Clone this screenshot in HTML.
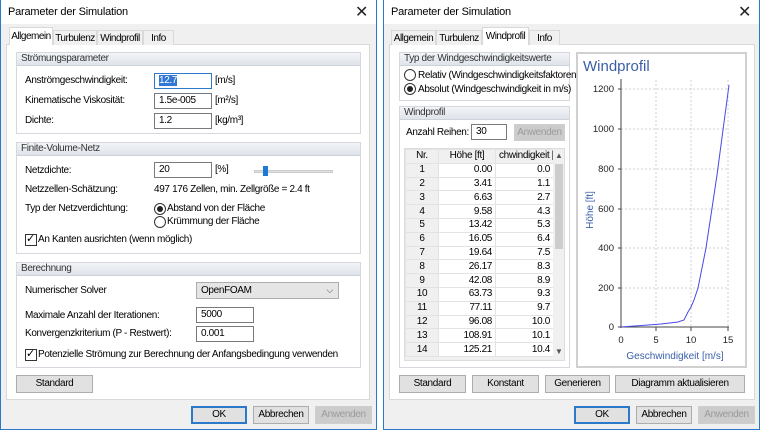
<!DOCTYPE html>
<html><head><meta charset="utf-8"><style>
*{box-sizing:border-box;margin:0;padding:0}
body{width:760px;height:430px;background:#fff;font-family:"Liberation Sans",Arial,sans-serif;font-size:10px;letter-spacing:-0.35px;color:#000;position:relative;overflow:hidden}
.a{position:absolute;white-space:nowrap}
.dlg{position:absolute;top:0;height:430px;width:377px;background:#f0f0f0;border:1px solid #2b79c8;border-top:none}
.tb{position:absolute;left:0;top:0;right:0;height:24px;background:#fff}
.ttl{position:absolute;left:7px;top:6px;font-size:11px;letter-spacing:-0.2px}
.x{position:absolute;right:8px;top:2px;font-size:16px;color:#222}
.panel{position:absolute;background:#fff;border:1px solid #d9d9d9}
.tab{position:absolute;top:30px;height:15px;border:1px solid #d9d9d9;border-bottom:none;background:#f0f0f0;padding:2px 0 0;text-align:center;white-space:nowrap;overflow:hidden;letter-spacing:-0.5px}
.tab.s{top:27px;height:18px;background:#fff;z-index:2;padding-top:3px}
.grp{position:absolute;border:1px solid #d5d8de;background:#fff}
.gh{position:absolute;left:0;right:0;top:0;height:13px;background:linear-gradient(#f2f4f7,#dfe4eb);border-bottom:1px solid #cdd2da;color:#333;padding-left:4px;line-height:12px;white-space:nowrap;overflow:hidden}
.inp{position:absolute;height:16px;border:1px solid #7a7a7a;background:#fff;padding-left:4px;line-height:14px}
.btn{position:absolute;height:18px;border:1px solid #adadad;background:#e1e1e1;text-align:center;line-height:16px;white-space:nowrap}
.dis{color:#9a9a9a;border-color:#cfcfcf;background:#ccc}
.def{border:2px solid #2b79c8;line-height:14px}
.rad{position:absolute;width:12px;height:12px;border:1px solid #333;border-radius:50%;background:#fff}
.rad.on::after{content:"";position:absolute;left:2px;top:2px;width:6px;height:6px;border-radius:50%;background:#222}
.chk{position:absolute;width:12px;height:12px;border:1px solid #333;background:#fff}
table{border-collapse:collapse;font-size:10px;table-layout:fixed}
td{border:1px solid #e3e3e3;height:13.8px;padding:0 3px;line-height:12px;white-space:nowrap;overflow:hidden}
</style></head><body>

<!-- LEFT DIALOG -->
<div class="dlg" style="left:0">
<div class="tb"><span class="ttl">Parameter der Simulation</span><span class="x">✕</span></div>
<div class="panel" style="left:5px;top:44px;width:364px;height:356px"></div>
<div class="tab s" style="left:8px;width:44px">Allgemein</div>
<div class="tab" style="left:52px;width:44px">Turbulenz</div>
<div class="tab" style="left:96px;width:46px">Windprofil</div>
<div class="tab" style="left:142px;width:31px">Info</div>

<div class="grp" style="left:15px;top:52px;width:345px;height:82px"><div class="gh">Strömungsparameter</div></div>
<span class="a" style="left:24px;top:75px">Anströmgeschwindigkeit:</span>
<div class="inp" style="left:153px;top:73px;width:58px;border-color:#2b79c8"><span style="background:#3277d6;color:#fff">12.7</span></div>
<span class="a" style="left:214px;top:75px">[m/s]</span>
<span class="a" style="left:24px;top:95px">Kinematische Viskosität:</span>
<div class="inp" style="left:153px;top:93px;width:58px">1.5e-005</div>
<span class="a" style="left:214px;top:95px">[m²/s]</span>
<span class="a" style="left:24px;top:115px">Dichte:</span>
<div class="inp" style="left:153px;top:113px;width:58px">1.2</div>
<span class="a" style="left:214px;top:115px">[kg/m³]</span>

<div class="grp" style="left:15px;top:142px;width:345px;height:112px"><div class="gh">Finite-Volume-Netz</div></div>
<span class="a" style="left:24px;top:165px">Netzdichte:</span>
<div class="inp" style="left:153px;top:162px;width:58px">20</div>
<span class="a" style="left:214px;top:164px">[%]</span>
<div class="a" style="left:253px;top:170px;width:79px;height:3px;background:#e0e0e0;border:1px solid #ccc"></div>
<div class="a" style="left:262px;top:166px;width:5px;height:10px;background:#1e78d6"></div>
<span class="a" style="left:24px;top:184px">Netzzellen-Schätzung:</span>
<span class="a" style="left:153px;top:184px">497 176 Zellen, min. Zellgröße = 2.4 ft</span>
<span class="a" style="left:24px;top:203px">Typ der Netzverdichtung:</span>
<div class="rad on" style="left:153px;top:203px"></div><span class="a" style="left:166px;top:203px">Abstand von der Fläche</span>
<div class="rad" style="left:153px;top:216px"></div><span class="a" style="left:166px;top:216px">Krümmung der Fläche</span>
<div class="chk" style="left:24px;top:234px"></div><span class="a" style="left:25px;top:232px;font-size:11px">✓</span><span class="a" style="left:37px;top:234px">An Kanten ausrichten (wenn möglich)</span>

<div class="grp" style="left:15px;top:262px;width:345px;height:106px"><div class="gh">Berechnung</div></div>
<span class="a" style="left:24px;top:285px">Numerischer Solver</span>
<div class="a" style="left:195px;top:282px;width:143px;height:17px;border:1px solid #adadad;background:#e5e5e5;padding-left:4px;line-height:15px">OpenFOAM<span style="position:absolute;right:5px;top:0;font-size:9px;color:#444">⌵</span></div>
<span class="a" style="left:24px;top:310px">Maximale Anzahl der Iterationen:</span>
<div class="inp" style="left:195px;top:307px;width:58px">5000</div>
<span class="a" style="left:24px;top:328px">Konvergenzkriterium (P - Restwert):</span>
<div class="inp" style="left:195px;top:326px;width:58px">0.001</div>
<div class="chk" style="left:24px;top:349px"></div><span class="a" style="left:25px;top:347px;font-size:11px">✓</span><span class="a" style="left:37px;top:349px">Potenzielle Strömung zur Berechnung der Anfangsbedingung verwenden</span>

<div class="btn" style="left:15px;top:375px;width:77px">Standard</div>
<div class="btn def" style="left:190px;top:406px;width:56px">OK</div>
<div class="btn" style="left:252px;top:406px;width:56px">Abbrechen</div>
<div class="btn dis" style="left:314px;top:406px;width:57px">Anwenden</div>
</div>

<!-- RIGHT DIALOG -->
<div class="dlg" style="left:383px">
<div class="tb"><span class="ttl">Parameter der Simulation</span><span class="x">✕</span></div>
<div class="panel" style="left:5px;top:44px;width:366px;height:356px"></div>
<div class="tab" style="left:7px;width:45px">Allgemein</div>
<div class="tab" style="left:52px;width:46px">Turbulenz</div>
<div class="tab s" style="left:98px;width:47px">Windprofil</div>
<div class="tab" style="left:145px;width:31px">Info</div>

<div class="grp" style="left:15px;top:52px;width:171px;height:49px"><div class="gh">Typ der Windgeschwindigkeitswerte</div></div>
<div class="rad" style="left:20px;top:69px"></div><span class="a" style="left:34px;top:70px">Relativ (Windgeschwindigkeitsfaktoren)</span>
<div class="rad on" style="left:20px;top:83px"></div><span class="a" style="left:34px;top:84px">Absolut (Windgeschwindigkeit in m/s)</span>

<div class="grp" style="left:15px;top:106px;width:171px;height:262px"><div class="gh">Windprofil</div></div>
<span class="a" style="left:22px;top:127px">Anzahl Reihen:</span>
<div class="inp" style="left:87px;top:124px;width:36px">30</div>
<div class="btn dis" style="left:130px;top:124px;width:51px;height:17px">Anwenden</div>

<div class="a" style="left:20px;top:148px;width:161px;height:213px;border:1px solid #ddd;background:#f0f0f0;overflow:hidden">
<table style="width:148px;background:#fff">
<col style="width:33px"><col style="width:57px"><col style="width:58px">
<tr style="background:#f0f0f0"><td style="text-align:center">Nr.</td><td style="text-align:center">Höhe [ft]</td><td style="text-align:right">chwindigkeit [</td></tr>
<tr><td style="background:#f0f0f0;text-align:center">1</td><td align="right">0.00</td><td align="right">0.0</td></tr>
<tr><td style="background:#f0f0f0;text-align:center">2</td><td align="right">3.41</td><td align="right">1.1</td></tr>
<tr><td style="background:#f0f0f0;text-align:center">3</td><td align="right">6.63</td><td align="right">2.7</td></tr>
<tr><td style="background:#f0f0f0;text-align:center">4</td><td align="right">9.58</td><td align="right">4.3</td></tr>
<tr><td style="background:#f0f0f0;text-align:center">5</td><td align="right">13.42</td><td align="right">5.3</td></tr>
<tr><td style="background:#f0f0f0;text-align:center">6</td><td align="right">16.05</td><td align="right">6.4</td></tr>
<tr><td style="background:#f0f0f0;text-align:center">7</td><td align="right">19.64</td><td align="right">7.5</td></tr>
<tr><td style="background:#f0f0f0;text-align:center">8</td><td align="right">26.17</td><td align="right">8.3</td></tr>
<tr><td style="background:#f0f0f0;text-align:center">9</td><td align="right">42.08</td><td align="right">8.9</td></tr>
<tr><td style="background:#f0f0f0;text-align:center">10</td><td align="right">63.73</td><td align="right">9.3</td></tr>
<tr><td style="background:#f0f0f0;text-align:center">11</td><td align="right">77.11</td><td align="right">9.7</td></tr>
<tr><td style="background:#f0f0f0;text-align:center">12</td><td align="right">96.08</td><td align="right">10.0</td></tr>
<tr><td style="background:#f0f0f0;text-align:center">13</td><td align="right">108.91</td><td align="right">10.1</td></tr>
<tr><td style="background:#f0f0f0;text-align:center">14</td><td align="right">125.21</td><td align="right">10.4</td></tr>
</table>
<div class="a" style="left:148px;top:0;width:12px;height:212px;background:#f0f0f0"></div>
<div class="a" style="left:150px;top:15px;width:8px;height:85px;background:#cdcdcd"></div>
<span class="a" style="left:150px;top:2px;font-size:8px;color:#555">▲</span>
<span class="a" style="left:150px;top:198px;font-size:8px;color:#555">▼</span>
</div>

<div class="grp" style="left:192px;top:52px;width:171px;height:316px;border:2px solid #d0d0d0"></div>
<svg class="a" style="left:192px;top:52px;letter-spacing:0" width="171" height="316" viewBox="575 52 171 316">
<text x="582" y="71" font-family="Liberation Sans" font-size="15" fill="#3a5fa8">Windprofil</text>
<g stroke="#d0d0d0" stroke-dasharray="2,2" stroke-width="1">
<line x1="655" y1="80" x2="655" y2="327"/><line x1="690" y1="80" x2="690" y2="327"/><line x1="727" y1="80" x2="727" y2="327"/>
<line x1="620" y1="89" x2="728" y2="89"/><line x1="620" y1="129" x2="728" y2="129"/><line x1="620" y1="169" x2="728" y2="169"/><line x1="620" y1="209" x2="728" y2="209"/><line x1="620" y1="248" x2="728" y2="248"/><line x1="620" y1="288" x2="728" y2="288"/>
</g>
<line x1="620" y1="79" x2="620" y2="328" stroke="#444"/>
<line x1="620" y1="327" x2="728" y2="327" stroke="#444"/>
<g stroke="#444">
<line x1="617" y1="89" x2="620" y2="89"/><line x1="617" y1="129" x2="620" y2="129"/><line x1="617" y1="169" x2="620" y2="169"/><line x1="617" y1="209" x2="620" y2="209"/><line x1="617" y1="248" x2="620" y2="248"/><line x1="617" y1="288" x2="620" y2="288"/><line x1="617" y1="327" x2="620" y2="327"/>
<line x1="655" y1="327" x2="655" y2="331"/><line x1="690" y1="327" x2="690" y2="331"/><line x1="727" y1="327" x2="727" y2="331"/>
</g>
<g font-family="Liberation Sans" font-size="9.5" fill="#222" text-anchor="end">
<text x="613" y="92">1200</text><text x="613" y="132">1000</text><text x="613" y="172">800</text><text x="613" y="212">600</text><text x="613" y="251">400</text><text x="613" y="291">200</text><text x="613" y="330">0</text>
</g>
<g font-family="Liberation Sans" font-size="9.5" fill="#222" text-anchor="middle">
<text x="620" y="343">0</text><text x="655" y="343">5</text><text x="690" y="343">10</text><text x="727" y="343">15</text>
</g>
<text x="674" y="359" font-family="Liberation Sans" font-size="10" fill="#3a5fa8" text-anchor="middle">Geschwindigkeit [m/s]</text>
<text transform="translate(592,210) rotate(-90)" font-family="Liberation Sans" font-size="10" fill="#3a5fa8" text-anchor="middle">Höhe [ft]</text>
<polyline fill="none" stroke="#4a4ae8" stroke-width="1" points="620,327 660,324 677,322 683,320 687,312 690,307 693,300 697,288 701,268 705,248 708,228 710,215 716,175 722,130 728,85"/>
</svg>

<div class="btn" style="left:15px;top:375px;width:67px">Standard</div>
<div class="btn" style="left:88px;top:375px;width:67px">Konstant</div>
<div class="btn" style="left:161px;top:375px;width:65px">Generieren</div>
<div class="btn" style="left:231px;top:375px;width:130px">Diagramm aktualisieren</div>
<div class="btn def" style="left:190px;top:406px;width:56px">OK</div>
<div class="btn" style="left:252px;top:406px;width:56px">Abbrechen</div>
<div class="btn dis" style="left:314px;top:406px;width:57px">Anwenden</div>
</div>
</body></html>
